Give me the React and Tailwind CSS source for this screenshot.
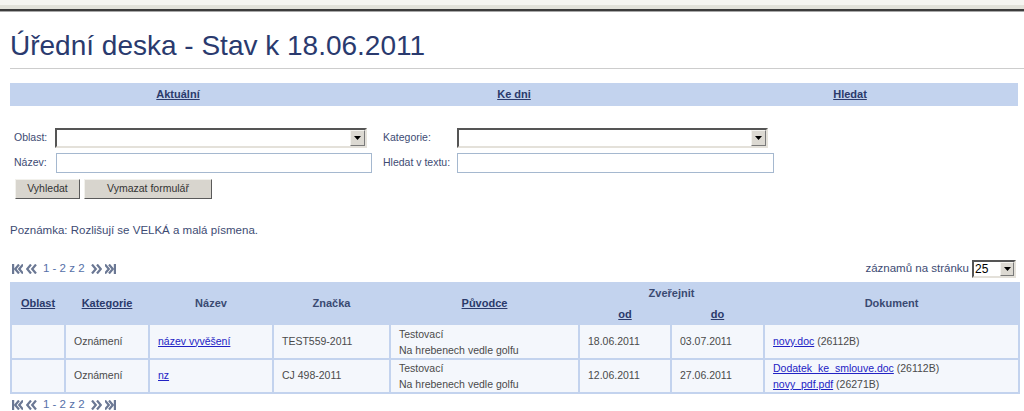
import React from "react";

const navy = "text-[#2b3a6b]";

function FirstIcon() {
  return (
    <svg width="11" height="10" viewBox="0 0 11 10" className="block">
      <rect x="0" y="0" width="2.2" height="10" fill="#6b7894" />
      <polyline points="7,0.5 3.2,5 7,9.5" fill="none" stroke="#6b7894" strokeWidth="2.2" />
      <polyline points="11,0.5 7.2,5 11,9.5" fill="none" stroke="#6b7894" strokeWidth="2.2" />
    </svg>
  );
}
function PrevIcon() {
  return (
    <svg width="11" height="10" viewBox="0 0 11 10" className="block">
      <polyline points="5,0.5 1.2,5 5,9.5" fill="none" stroke="#6b7894" strokeWidth="2.2" />
      <polyline points="10,0.5 6.2,5 10,9.5" fill="none" stroke="#6b7894" strokeWidth="2.2" />
    </svg>
  );
}
function NextIcon() {
  return (
    <svg width="11" height="10" viewBox="0 0 11 10" className="block">
      <polyline points="1,0.5 4.8,5 1,9.5" fill="none" stroke="#6b7894" strokeWidth="2.2" />
      <polyline points="6,0.5 9.8,5 6,9.5" fill="none" stroke="#6b7894" strokeWidth="2.2" />
    </svg>
  );
}
function LastIcon() {
  return (
    <svg width="11" height="10" viewBox="0 0 11 10" className="block">
      <polyline points="0,0.5 3.8,5 0,9.5" fill="none" stroke="#6b7894" strokeWidth="2.2" />
      <polyline points="4,0.5 7.8,5 4,9.5" fill="none" stroke="#6b7894" strokeWidth="2.2" />
      <rect x="8.8" y="0" width="2.2" height="10" fill="#6b7894" />
    </svg>
  );
}

function Pager() {
  return (
    <div className="flex items-center gap-[3px] text-[11.5px] text-[#5670a8]">
      <FirstIcon />
      <PrevIcon />
      <span className="ml-[3px] mr-[3px] leading-none">1 - 2 z 2</span>
      <NextIcon />
      <LastIcon />
    </div>
  );
}

function SelectBox({ w, value }) {
  return (
    <div
      className={`${w} h-[20px] flex bg-white border-2 border-t-[#555] border-l-[#555] border-b-[#e4e1da] border-r-[#e4e1da]`}
    >
      <div className="flex-1 text-[12px] leading-[16px] pl-[1px] text-black">{value}</div>
      <div className="w-[15px] h-[16px] bg-[#dcd9d2] border border-t-[#f4f3ef] border-l-[#f4f3ef] border-b-[#7a7a7a] border-r-[#7a7a7a] flex items-center justify-center">
        <svg width="7" height="4" viewBox="0 0 7 4">
          <polygon points="0,0 7,0 3.5,4" fill="#000" />
        </svg>
      </div>
    </div>
  );
}

function TextInput({ w }) {
  return <div className={`${w} h-[20px] bg-white border border-[#a5b8cf]`} />;
}

function Btn({ children, w }) {
  return (
    <div
      className={`${w} h-[20px] flex items-center justify-center bg-[#d8d5ce] text-[10.5px] text-[#333] border border-t-[#f2f1ec] border-l-[#f2f1ec] border-b-[#5a5a5a] border-r-[#5a5a5a]`}
    >
      {children}
    </div>
  );
}

const th = "font-bold text-[11px] text-center align-middle p-0";
const td = "bg-[#f4f7fc] text-[10.5px] text-[#4a4a4a] pl-[8px] align-middle p-0";
const link = "text-[#2222c4] underline";

export default function App() {
  return (
    <div className="w-[1024px] h-[411px] overflow-hidden bg-white font-['Liberation_Sans',Arial,sans-serif]">
      <div className="h-[5px] bg-[#f5f5f1]" />
      <div className="h-[4px] bg-[#e2e2da]" />
      <div className="h-[2px] bg-[#3c3c3c]" />
      <div className="h-[1px] bg-[#a8a8a8]" />

      <div className="ml-[10px] mt-[18px] pb-[6px] border-b border-[#cdcdcd]">
        <div className="h-[32px] leading-[32px] text-[28px] text-[#2a3a6e]">
          Úřední deska - Stav k 18.06.2011
        </div>
      </div>

      <div className="ml-[10px] mr-[6px] mt-[14px] h-[23px] bg-[#c3d3ee] grid grid-cols-3 items-center">
        <div className={`text-center text-[11px] font-bold underline ${navy}`}>Aktuální</div>
        <div className={`text-center text-[11px] font-bold underline ${navy}`}>Ke dni</div>
        <div className={`text-center text-[11px] font-bold underline ${navy}`}>Hledat</div>
      </div>

      <div className="mt-[22px] pl-[14px] text-[10.5px] text-[#3d4b73]">
        <div className="flex items-center h-[20px]">
          <div className="w-[41px]">Oblast:</div>
          <div className="w-[328px]">
            <SelectBox w="w-[312px]" />
          </div>
          <div className="w-[74px]">Kategorie:</div>
          <SelectBox w="w-[311px]" />
        </div>
        <div className="flex items-center h-[20px] mt-[5px]">
          <div className="w-[42px]">Název:</div>
          <div className="w-[327px]">
            <TextInput w="w-[316px]" />
          </div>
          <div className="w-[74px]">Hledat v textu:</div>
          <TextInput w="w-[317px]" />
        </div>
        <div className="flex items-center gap-[4px] mt-[6px] pl-[1px]">
          <Btn w="w-[65px]">Vyhledat</Btn>
          <Btn w="w-[128px]">Vymazat formulář</Btn>
        </div>
      </div>

      <div className="mt-[24px] pl-[10px] h-[14px] leading-[14px] text-[11.5px] text-[#3d4b73]">
        Poznámka: Rozlišují se VELKÁ a malá písmena.
      </div>

      <div className="mt-[23px] h-[18px] pl-[12px] pr-[8px] flex items-center justify-between">
        <Pager />
        <div className="flex items-center gap-[3px]">
          <span className="text-[11.5px] text-[#3d4b73]">záznamů na stránku</span>
          <div className="w-[44px] h-[18px] flex bg-white border-2 border-t-[#555] border-l-[#555] border-b-[#e4e1da] border-r-[#e4e1da]">
            <div className="flex-1 text-[12px] leading-[14px] pl-[1px] text-black">25</div>
            <div className="w-[14px] h-[14px] bg-[#dcd9d2] border border-t-[#f4f3ef] border-l-[#f4f3ef] border-b-[#7a7a7a] border-r-[#7a7a7a] flex items-center justify-center">
              <svg width="7" height="4" viewBox="0 0 7 4">
                <polygon points="0,0 7,0 3.5,4" fill="#000" />
              </svg>
            </div>
          </div>
        </div>
      </div>

      <div className="mt-[4px] ml-[10px]">
        <table className="table-fixed w-[1010px] bg-[#c3d3ee] border-separate border-spacing-[2px]">
          <colgroup>
            <col className="w-[52px]" />
            <col className="w-[82px]" />
            <col className="w-[122px]" />
            <col className="w-[115px]" />
            <col className="w-[187px]" />
            <col className="w-[90px]" />
            <col className="w-[91px]" />
            <col className="w-[253px]" />
          </colgroup>
          <thead>
            <tr className="h-[19px]">
              <th rowSpan={2} className={`${th} ${navy} underline`}>Oblast</th>
              <th rowSpan={2} className={`${th} ${navy} underline`}>Kategorie</th>
              <th rowSpan={2} className={`${th} text-[#3a4a72]`}>Název</th>
              <th rowSpan={2} className={`${th} text-[#3a4a72]`}>Značka</th>
              <th rowSpan={2} className={`${th} ${navy} underline`}>Původce</th>
              <th colSpan={2} className={`${th} text-[#3a4a72]`}>Zveřejnit</th>
              <th rowSpan={2} className={`${th} text-[#3a4a72]`}>Dokument</th>
            </tr>
            <tr className="h-[18px]">
              <th className={`${th} ${navy} underline`}>od</th>
              <th className={`${th} ${navy} underline`}>do</th>
            </tr>
          </thead>
          <tbody>
            <tr className="h-[33px]">
              <td className={td}></td>
              <td className={td}>Oznámení</td>
              <td className={td}><span className={link}>název vyvěšení</span></td>
              <td className={td}>TEST559-2011</td>
              <td className={`${td} leading-[16px]`}>
                <div>Testovací</div>
                <div>Na hrebenech vedle golfu</div>
              </td>
              <td className={td}>18.06.2011</td>
              <td className={td}>03.07.2011</td>
              <td className={td}>
                <span className={link}>novy.doc</span> (26112B)
              </td>
            </tr>
            <tr className="h-[31px]">
              <td className={td}></td>
              <td className={td}>Oznámení</td>
              <td className={td}><span className={link}>nz</span></td>
              <td className={td}>CJ 498-2011</td>
              <td className={`${td} leading-[16px]`}>
                <div>Testovací</div>
                <div>Na hrebenech vedle golfu</div>
              </td>
              <td className={td}>12.06.2011</td>
              <td className={td}>27.06.2011</td>
              <td className={`${td} leading-[16px]`}>
                <div><span className={link}>Dodatek_ke_smlouve.doc</span> (26112B)</div>
                <div><span className={link}>novy_pdf.pdf</span> (26271B)</div>
              </td>
            </tr>
          </tbody>
        </table>
      </div>

      <div className="mt-[4px] h-[14px] pl-[12px] flex items-center">
        <Pager />
      </div>
    </div>
  );
}
